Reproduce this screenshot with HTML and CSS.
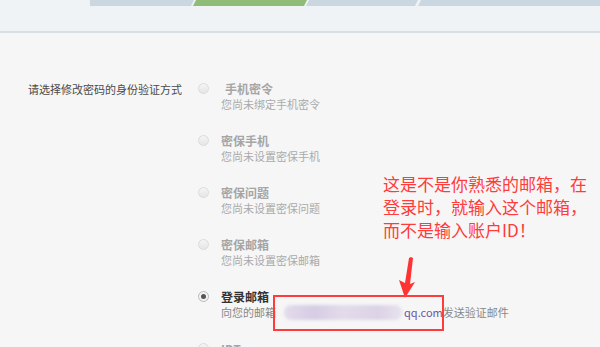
FILE: index.html
```html
<!DOCTYPE html>
<html lang="zh-CN">
<head>
<meta charset="utf-8">
<title>修改密码</title>
<link rel="stylesheet" href="styles.css">
</head>
<body>
<div class="header">
  <svg class="steps" width="600" height="6" viewBox="0 0 600 6">
    <polygon points="90,0 194,0 191,6 90,6" fill="#cbd7e0"/>
    <polygon points="196,0 307,0 304,6 193,6" fill="#8fbd78"/>
    <polygon points="309,0 418,0 415,6 306,6" fill="#cbd7e0"/>
    <polygon points="421,0 600,0 600,6 418,6" fill="#cbd7e0"/>
  </svg>
</div>
<div class="form">
  <div class="label">请选择修改密码的身份验证方式</div>
  <div class="options">
    <div class="item">
      <span class="radio"></span>
      <div class="text">
        <div class="title first">手机密令</div>
        <div class="desc">您尚未绑定手机密令</div>
      </div>
    </div>
    <div class="item">
      <span class="radio"></span>
      <div class="text">
        <div class="title">密保手机</div>
        <div class="desc">您尚未设置密保手机</div>
      </div>
    </div>
    <div class="item">
      <span class="radio"></span>
      <div class="text">
        <div class="title">密保问题</div>
        <div class="desc">您尚未设置密保问题</div>
      </div>
    </div>
    <div class="item">
      <span class="radio"></span>
      <div class="text">
        <div class="title">密保邮箱</div>
        <div class="desc">您尚未设置密保邮箱</div>
      </div>
    </div>
    <div class="item">
      <span class="radio checked"></span>
      <div class="text">
        <div class="title active">登录邮箱</div>
        <div class="desc active">向您的邮箱<span class="blur"></span><span class="mail">qq.com</span>发送验证邮件</div>
      </div>
    </div>
    <div class="item">
      <span class="radio"></span>
      <div class="text">
        <div class="title">IDT</div>
        <div class="desc">&nbsp;</div>
      </div>
    </div>
  </div>
</div>
<div class="note">这是不是你熟悉的邮箱，在<br>登录时，就输入这个邮箱，<br>而不是输入账户ID！</div>
<svg class="arrow" width="24" height="44" viewBox="0 0 24 44">
  <polygon points="15,0 17,1 14,27 19,25 9,41 3,23 9,26 13,1" fill="#ff3333"/>
</svg>
<div class="redbox"></div>
</body>
</html>
```
FILE: styles.css
```css
html, body {
  margin: 0;
  padding: 0;
}
body {
  width: 600px;
  height: 347px;
  overflow: hidden;
  background: #f6f6f6;
  font-family: "Noto Sans CJK SC", "Noto Sans", sans-serif;
  position: relative;
}
.header {
  height: 31px;
  background: #eff3f6;
  border-bottom: 2px solid #d7dee4;
}
.steps {
  display: block;
}
.form {
  display: flex;
  padding: 48px 0 0 28px;
}
.label {
  width: 170px;
  font-size: 11px;
  line-height: 16px;
  color: #4a4a4a;
  white-space: nowrap;
}
.options {
  display: flex;
  flex-direction: column;
  gap: 21px;
}
.item {
  display: flex;
  align-items: flex-start;
}
.radio {
  width: 9px;
  height: 9px;
  margin-top: 2px;
  margin-right: 12px;
  border: 1px solid #dcdcdc;
  border-radius: 50%;
  background: linear-gradient(#f4f4f4, #e6e6e6);
  display: flex;
  align-items: center;
  justify-content: center;
  flex: none;
}
.radio.checked {
  border-color: #bbb;
  background: #f2f2f2;
}
.radio.checked::after {
  content: "";
  width: 5px;
  height: 5px;
  border-radius: 50%;
  background: #555;
}
.title {
  font-size: 12px;
  line-height: 16px;
  font-weight: bold;
  color: #a5a5a5;
}
.title.first {
  padding-left: 4px;
}
.title.active {
  color: #333;
}
.desc {
  font-size: 11px;
  line-height: 15px;
  color: #aaa;
  white-space: nowrap;
  display: flex;
  align-items: center;
}
.desc.active {
  color: #888;
}
.blur {
  display: inline-block;
  width: 118px;
  height: 15px;
  margin: 0 2px 0 8px;
  border-radius: 7px;
  background: linear-gradient(90deg, #e4dcec 0%, #d6cce4 25%, #e3dbeb 50%, #dcd3e6 80%, #e8e2ee 100%);
  filter: blur(1.5px);
}
.mail {
  color: #6b55a6;
}
.note {
  position: absolute;
  left: 383px;
  top: 172px;
  font-size: 17px;
  line-height: 23px;
  color: #ff3b3b;
  white-space: nowrap;
}
.arrow {
  position: absolute;
  left: 396px;
  top: 257px;
}
.redbox {
  position: absolute;
  left: 273px;
  top: 295px;
  width: 167px;
  height: 32px;
  border: 2px solid #ff3b3b;
}
```
